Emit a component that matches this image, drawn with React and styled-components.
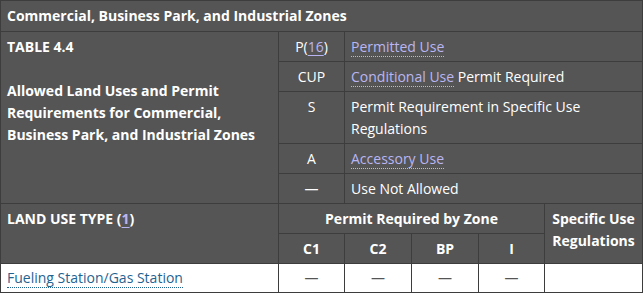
import styled, { createGlobalStyle } from "styled-components"

const GlobalStyle = createGlobalStyle`
  html, body {
    margin: 0;
    padding: 0;
    background: #ffffff;
  }
  body {
    font-family: "Open Sans", "Liberation Sans", sans-serif;
    font-size: 14px;
  }
`

const Table = styled.table`
  width: 642px;
  border-collapse: collapse;
  table-layout: fixed;
  font-family: "Open Sans", "Liberation Sans", sans-serif;
  font-size: 14px;
  line-height: 22px;
`

const Head = styled.thead`
  background: #555555;
  color: #ffffff;
`

const Cell = styled.td`
  border: 1px solid #3d3d3d;
  padding: 4px 6px 3px;
  vertical-align: top;
  text-align: ${(p) => (p.$center ? "center" : "left")};
  font-weight: ${(p) => (p.$bold ? 700 : 400)};
`

const TitleCell = styled(Cell)`
  padding: 4px 6px 4px;
  font-weight: 700;
`

const HeaderCell = styled.th`
  border: 1px solid #3d3d3d;
  padding: 4px 6px 3px;
  vertical-align: top;
  font-weight: 700;
  text-align: ${(p) => (p.$center ? "center" : "left")};
`

const Term = styled.span`
  color: #bab5f2;
  border-bottom: 1px dotted #bab5f2;
`

const Note = styled.span`
  color: #bab5f2;
  text-decoration: underline;
  text-underline-offset: 3px;
`

const Body = styled.tbody`
  background: #ffffff;
  color: #333333;
`

const DataCell = styled(Cell)`
  padding: 3px 6px 3px;
`

const UseLink = styled.span`
  color: #1f6391;
  border-bottom: 1px dotted #1f6391;
`

const Dash = styled.span`
  color: #555555;
`

const legend = [
  { code: <>P(<Note>16</Note>)</>, text: <Term>Permitted Use</Term> },
  { code: "CUP", text: <><Term>Conditional Use</Term> Permit Required</> },
  { code: "S", text: "Permit Requirement in Specific Use Regulations" },
  { code: "A", text: <Term>Accessory Use</Term> },
  { code: "—", text: "Use Not Allowed" },
]

export default function App() {
  return (
    <>
      <GlobalStyle />
      <Table>
        <colgroup>
          <col style={{ width: 278 }} />
          <col style={{ width: 66 }} />
          <col style={{ width: 67 }} />
          <col style={{ width: 67 }} />
          <col style={{ width: 66 }} />
          <col style={{ width: 98 }} />
        </colgroup>
        <Head>
          <tr>
            <TitleCell colSpan={6}>Commercial, Business Park, and Industrial Zones</TitleCell>
          </tr>
          {legend.map((row, i) => (
            <tr key={i}>
              {i === 0 && (
                <Cell rowSpan={5} $bold>
                  TABLE 4.4
                  <br />
                  <br />
                  Allowed Land Uses and Permit Requirements for Commercial, Business Park, and Industrial Zones
                </Cell>
              )}
              <Cell $center>{row.code}</Cell>
              <Cell colSpan={4}>{row.text}</Cell>
            </tr>
          ))}
          <tr>
            <HeaderCell rowSpan={2}>
              LAND USE TYPE (<Note>1</Note>)
            </HeaderCell>
            <HeaderCell colSpan={4} $center>Permit Required by Zone</HeaderCell>
            <HeaderCell rowSpan={2} $center>Specific Use Regulations</HeaderCell>
          </tr>
          <tr>
            <HeaderCell $center>C1</HeaderCell>
            <HeaderCell $center>C2</HeaderCell>
            <HeaderCell $center>BP</HeaderCell>
            <HeaderCell $center>I</HeaderCell>
          </tr>
        </Head>
        <Body>
          <tr>
            <DataCell>
              <UseLink>Fueling Station/Gas Station</UseLink>
            </DataCell>
            <DataCell $center><Dash>—</Dash></DataCell>
            <DataCell $center><Dash>—</Dash></DataCell>
            <DataCell $center><Dash>—</Dash></DataCell>
            <DataCell $center><Dash>—</Dash></DataCell>
            <DataCell />
          </tr>
        </Body>
      </Table>
    </>
  )
}
